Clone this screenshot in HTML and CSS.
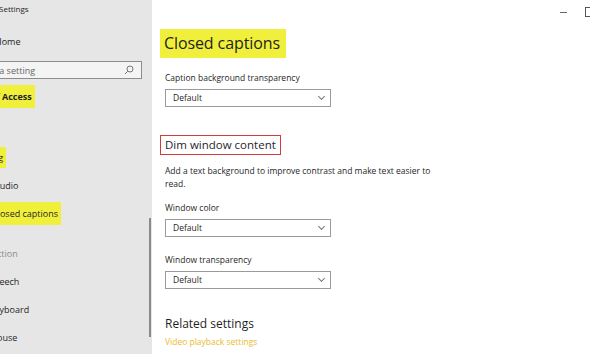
FILE: index.html
```html
<!DOCTYPE html>
<html lang="en">
<head>
    <meta charset="UTF-8">
    <title>Settings - Closed captions</title>
    <link rel="stylesheet" href="styles.css">
</head>
<body>
    <div class="window">
        <div class="sidebar">
            <div class="app-title">Settings</div>
            <div class="nav-item home">Home</div>
            <div class="search">
                <span class="search-text">Find a setting</span>
                <svg class="search-icon" width="10" height="10" viewBox="0 0 10 10">
                    <circle cx="6" cy="4" r="3" fill="none" stroke="#777" stroke-width="1"/>
                    <path d="M3.8 6.2 L1 9" stroke="#777" stroke-width="1"/>
                </svg>
            </div>
            <div class="section-title"><span class="mark">Ease of Access</span></div>
            <div class="nav-head hearing"><span class="mark">Hearing</span></div>
            <div class="nav-item audio">Audio</div>
            <div class="nav-item captions"><span class="mark">Closed captions</span></div>
            <div class="nav-head muted">Interaction</div>
            <div class="nav-item">Speech</div>
            <div class="nav-item">Keyboard</div>
            <div class="nav-item">Mouse</div>
            <div class="scroll-thumb"></div>
        </div>

        <div class="main">
            <div class="window-controls">
                <span class="ctl-min"></span>
                <span class="ctl-max"></span>
            </div>

            <h1 class="page-title"><span class="mark">Closed captions</span></h1>

            <div class="field first">
                <label>Caption background transparency</label>
                <div class="select">Default <span class="chev"></span></div>
            </div>

            <h2 class="group-title"><span class="boxed">Dim window content</span></h2>
            <p class="desc">Add a text background to improve contrast and make text easier to read.</p>

            <div class="field">
                <label>Window color</label>
                <div class="select">Default <span class="chev"></span></div>
            </div>

            <div class="field">
                <label>Window transparency</label>
                <div class="select">Default <span class="chev"></span></div>
            </div>

            <h2 class="related">Related settings</h2>
            <a class="link">Video playback settings</a>
        </div>
    </div>
</body>
</html>
```

FILE: styles.css
```css
:root { --side: #e6e6e6; --mark: #f0f03c; --text: #1f1f1f; --muted: #8a8a8a; --red: #d23c3c; --link: #ebbb2e; }
body { margin: 0; font-family: 'Open Sans', 'Noto Sans', sans-serif; color: var(--text); background: #fff; }

.window { display: flex; width: 590px; height: 354px; overflow: hidden; }

/* SIDEBAR - text is cut at the left edge of the window */
.sidebar { position: relative; width: 152px; flex-shrink: 0; background: var(--side); overflow: hidden; font-size: 9px; }
.app-title { height: 28px; line-height: 18px; margin-left: -1px; font-size: 8px; }
.nav-item { height: 28px; line-height: 28px; margin-left: -11px; white-space: nowrap; }
.nav-item.home { margin-left: -5px; }
.nav-item.audio { margin-left: -6px; }
.nav-item.captions { margin-left: -22px; }
.nav-head { height: 28px; line-height: 28px; white-space: nowrap; }
.nav-head.hearing { margin-left: -44px; }
.nav-head.muted { color: var(--muted); margin: 12px 0 0 -28px; }
.section-title { height: 60px; line-height: 26px; margin-left: -36px; font-weight: bold; white-space: nowrap; }
.mark { background: var(--mark); padding: 4px 3px 4px 14px; }
.section-title .mark { padding: 5px 3px 5px 4px; }
.nav-item .mark { padding: 5px 3px 5px 14px; }

.search { display: flex; align-items: center; justify-content: space-between; height: 18px; width: 156px; margin: 5px 0 5px -14px; background: #f4f4f4; border: 1px solid #8c8c8c; padding-right: 7px; box-sizing: border-box; }
.search-text { color: #666; margin-left: -8px; white-space: nowrap; }

.scroll-thumb { position: absolute; left: 149px; top: 218px; width: 2px; height: 119px; background: #8a8a8a; }

/* MAIN */
.main { position: relative; flex: 1; padding-left: 13px; }
.window-controls { position: absolute; top: 7px; right: 0; display: flex; gap: 18px; align-items: center; }
.ctl-min { width: 7px; height: 1px; background: #666; }
.ctl-max { width: 4px; height: 8px; border: 1px solid #555; border-right: none; }

.page-title { margin: 29px 0 0 -5px; font-size: 16px; font-weight: normal; line-height: 29px; }
.page-title .mark { display: inline-block; padding: 0 6px 0 4px; letter-spacing: -0.1px; }

.field label { display: block; font-size: 8.5px; line-height: 12px; margin-top: 12px; }
.field.first label { margin-top: 14px; }
.field + .field label { margin-top: 17px; }
.select { width: 166px; height: 18px; margin-top: 5px; border: 1px solid #9a9a9a; box-sizing: border-box; font-size: 8.5px; line-height: 16px; padding-left: 7px; position: relative; }
.chev { position: absolute; right: 6px; top: 4px; width: 4px; height: 4px; border-right: 1px solid #777; border-bottom: 1px solid #777; transform: rotate(45deg); }

.group-title { margin: 28px 0 0 -5px; font-size: 11.5px; font-weight: normal; line-height: 16px; }
.boxed { display: inline-block; border: 1.5px solid var(--red); padding: 1px 4px 2px 4px; line-height: 15px; }
.desc { margin: 9px 0 0; width: 280px; font-size: 8.5px; line-height: 13px; }

.related { margin: 27px 0 0; font-size: 12px; font-weight: normal; line-height: 16px; }
.link { display: block; margin-top: 4px; font-size: 8.5px; line-height: 12px; color: var(--link); }
```
